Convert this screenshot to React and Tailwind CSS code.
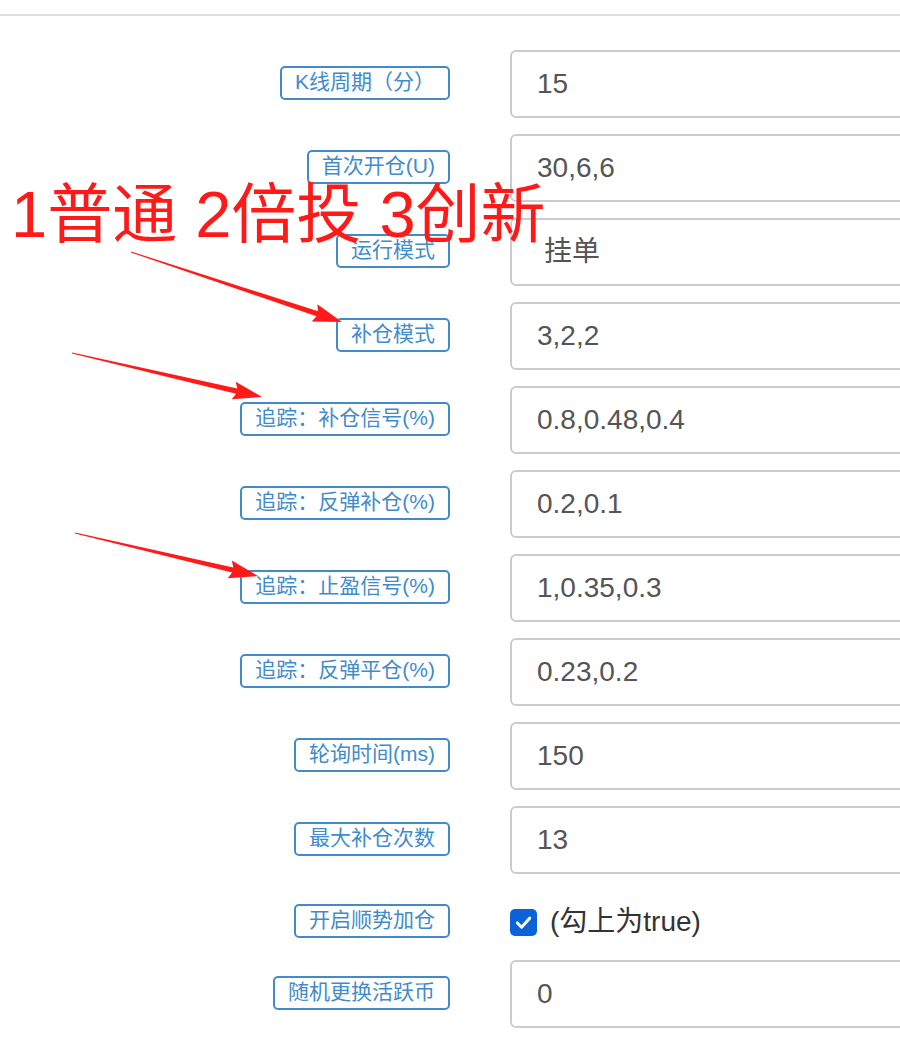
import React from 'react';

const rows = [
  { label: 'K线周期（分）', value: '15' },
  { label: '首次开仓(U)', value: '30,6,6' },
  { label: '运行模式', value: '挂单', select: true },
  { label: '补仓模式', value: '3,2,2' },
  { label: '追踪：补仓信号(%)', value: '0.8,0.48,0.4' },
  { label: '追踪：反弹补仓(%)', value: '0.2,0.1' },
  { label: '追踪：止盈信号(%)', value: '1,0.35,0.3' },
  { label: '追踪：反弹平仓(%)', value: '0.23,0.2' },
  { label: '轮询时间(ms)', value: '150' },
  { label: '最大补仓次数', value: '13' },
];

const arrows = [
  [131, 252, 342, 322],
  [72, 353, 262, 397],
  [75, 533, 258, 576],
];

// tapered arrow: thin tail, widening shaft, solid head
const arrowPoints = (x1, y1, x2, y2) => {
  const dx = x2 - x1;
  const dy = y2 - y1;
  const len = Math.hypot(dx, dy);
  const ux = dx / len;
  const uy = dy / len;
  const nx = -uy;
  const ny = ux;
  const headLen = 26;
  const headW = 9;
  const shaftW = 2.6;
  const bx = x2 - ux * headLen;
  const by = y2 - uy * headLen;
  const pts = [
    [x1 + nx * 0.5, y1 + ny * 0.5],
    [bx + nx * shaftW, by + ny * shaftW],
    [bx - ux * 3 + nx * headW, by - uy * 3 + ny * headW],
    [x2, y2],
    [bx - ux * 3 - nx * headW, by - uy * 3 - ny * headW],
    [bx - nx * shaftW, by - ny * shaftW],
    [x1 - nx * 0.5, y1 - ny * 0.5],
  ];
  return pts.map((p) => p.join(',')).join(' ');
};

const Label = ({ children }) => (
  <div className="w-[450px] flex justify-end shrink-0 pb-[3px]">
    <span className="border-2 border-[#428bca] rounded-[5px] px-[13px] pb-[2px] h-[34px] flex items-center text-[21px] leading-none text-[#428bca] whitespace-nowrap">
      {children}
    </span>
  </div>
);

const App = () => {
  return (
    <div
      className="relative w-[900px] h-[1037px] overflow-hidden bg-white"
      style={{ fontFamily: '"Liberation Sans", "Noto Sans CJK SC", sans-serif' }}
    >
      <div className="mt-[14px] border-t-2 border-[#dddddd]" />
      <div className="pt-[34px] flex flex-col">
        {rows.map((r) => (
          <div key={r.label} className="flex items-center gap-[60px] h-[68px] mb-4">
            <Label>{r.label}</Label>
            <div
              className={
                'w-[480px] h-[68px] shrink-0 border-2 border-[#cccccc] rounded-[6px] flex items-center text-[28px] text-[#555555] ' +
                (r.select ? 'pl-[32px]' : 'pl-[25px]')
              }
            >
              {r.value}
            </div>
          </div>
        ))}
        <div className="flex items-center gap-[60px] h-[64px] mb-[6px]">
          <Label>开启顺势加仓</Label>
          <div className="flex items-center gap-[13px]">
            <div className="w-[27px] h-[27px] rounded-[5px] bg-[#0b63d9] flex items-center justify-center">
              <svg width="19" height="19" viewBox="0 0 20 20" fill="none">
                <path d="M3.5 10.5 L8 15 L16.5 5.5" stroke="white" strokeWidth="3.2" strokeLinecap="round" strokeLinejoin="round" />
              </svg>
            </div>
            <span className="text-[28px] text-[#333333]">(勾上为true)</span>
          </div>
        </div>
        <div className="flex items-center gap-[60px] h-[68px]">
          <Label>随机更换活跃币</Label>
          <div className="w-[480px] h-[68px] shrink-0 border-2 border-[#cccccc] rounded-[6px] flex items-center pl-[25px] text-[28px] text-[#555555]">
            0
          </div>
        </div>
      </div>

      <div className="absolute left-[11px] top-[182px] text-[65px] leading-none text-[#ff1a1a] whitespace-nowrap">
        1普通 2倍投 3创新
      </div>

      <svg className="absolute left-0 top-0 pointer-events-none" width="900" height="1037">
        {arrows.map((a, i) => (
          <polygon key={i} points={arrowPoints(...a)} fill="#ff1a1a" />
        ))}
      </svg>
    </div>
  );
};

export default App;
